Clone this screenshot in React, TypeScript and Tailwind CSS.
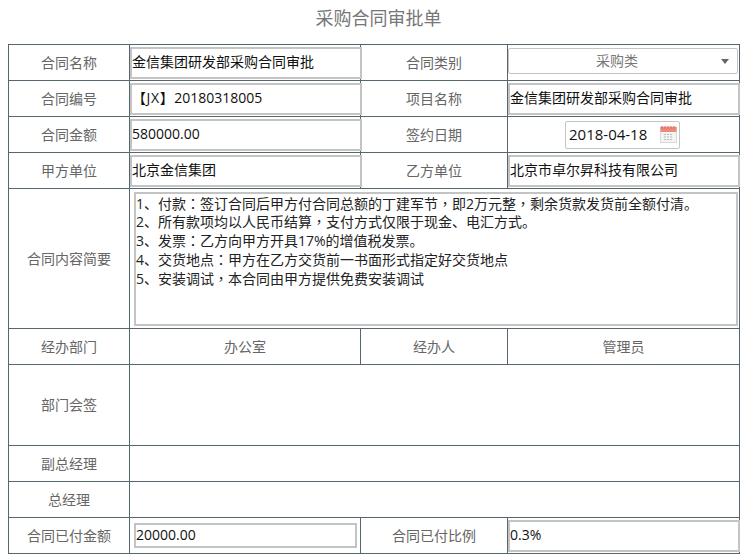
import React from "react";

const cellL = "border border-[#56666f] text-center text-[14px] text-[#666] p-0 pb-[1px] align-middle";
const cellV = "border border-[#56666f] p-0 align-middle relative";
const boxed = "block h-[32px] border-2 border-[#c4c4c4] bg-white text-[14px] leading-[26px] text-[#111] whitespace-nowrap box-border";
const line = "h-[18.75px] overflow-visible whitespace-nowrap";

function P({ c }: { c: string }) {
  return <span className="font-['Noto_Sans_CJK_TC',sans-serif]">{c}</span>;
}

export default function App() {
  return (
    <div className="w-[746px] h-[558px] bg-white overflow-hidden font-['Open_Sans','Noto_Sans_CJK_SC',sans-serif]">
      <div className="h-[44px] pl-[11px] text-center text-[18px] leading-[37px] text-[#777]">采购合同审批单</div>
      <table className="ml-[8px] w-[731px] table-fixed border-collapse border border-[#333]">
        <colgroup>
          <col className="w-[121px]" />
          <col className="w-[231px]" />
          <col className="w-[147px]" />
          <col className="w-[232px]" />
        </colgroup>
        <tbody>
          <tr className="h-[36px]">
            <td className={cellL}>合同名称</td>
            <td className={cellV}><div className={`${boxed} w-[232px]`}>金信集团研发部采购合同审批</div></td>
            <td className={cellL}>合同类别</td>
            <td className={cellV}>
              <div className="relative mb-[4px] box-border h-[26px] w-[230px] rounded-[2px] border border-[#c4c4c4] pr-[12px] text-center text-[14px] leading-[23px] text-[#777]">
                采购类
                <span className="absolute right-[8px] top-[10px] h-0 w-0 border-x-[4px] border-t-[5px] border-x-transparent border-t-[#666]" />
              </div>
            </td>
          </tr>
          <tr className="h-[36px]">
            <td className={cellL}>合同编号</td>
            <td className={cellV}><div className={`${boxed} w-[232px]`}><span className="tracking-[0.6px]">【JX】</span>20180318005</div></td>
            <td className={cellL}>项目名称</td>
            <td className={cellV}><div className={`${boxed} w-[232px]`}>金信集团研发部采购合同审批</div></td>
          </tr>
          <tr className="h-[36px]">
            <td className={cellL}>合同金额</td>
            <td className={cellV}><div className={`${boxed} w-[232px]`}>580000.00</div></td>
            <td className={cellL}>签约日期</td>
            <td className={cellV}>
              <div className="ml-[57px] flex h-[28px] w-[115px] items-center rounded-[2px] border border-[#c4c4c4] pl-[3px] text-[15px] leading-[24px] text-[#111]">
                <span className="mb-[1px]">2018-04-18</span>
                <svg className="ml-[13px]" width="17" height="17" viewBox="0 0 17 17">
                  <rect x="0.5" y="1" width="16" height="15.5" fill="#f4f4f4" stroke="#d8d8d8" />
                  <rect x="0.5" y="1" width="16" height="5" fill="#ee8a7c" />
                  <path d="M2 0v3M5 0v3M8 0v3M11 0v3M14 0v3" stroke="#e2675a" />
                  <path d="M4 8.5h9M4 11h9M4 13.5h9" stroke="#bbb" strokeDasharray="2 1" />
                </svg>
              </div>
            </td>
          </tr>
          <tr className="h-[36px]">
            <td className={cellL}>甲方单位</td>
            <td className={cellV}><div className={`${boxed} w-[232px]`}>北京金信集团</div></td>
            <td className={cellL}>乙方单位</td>
            <td className={cellV}><div className={`${boxed} w-[232px]`}>北京市卓尔昇科技有限公司</div></td>
          </tr>
          <tr className="h-[140px]">
            <td className={cellL}>合同内容简要</td>
            <td className={cellV} colSpan={3}>
              <div className="ml-[4px] box-border h-[134px] w-[604px] border-2 border-[#c4c4c4] text-[14px] leading-[18px] text-[#222]">
                <div className={line}>1、付款<P c="：" />签订合同后甲方付合同总额的丁建军节<P c="，" />即2万元整<P c="，" />剩余货款发货前全额付清。</div>
                <div className={line}>2、所有款项均以人民币结算<P c="，" />支付方式仅限于现金、电汇方式。</div>
                <div className={line}>3、发票<P c="：" />乙方向甲方开具17%的增值税发票。</div>
                <div className={line}>4、交货地点<P c="：" />甲方在乙方交货前一书面形式指定好交货地点</div>
                <div className={line}>5、安装调试<P c="，" />本合同由甲方提供免费安装调试</div>
              </div>
            </td>
          </tr>
          <tr className="h-[36px]">
            <td className={cellL}>经办部门</td>
            <td className={cellL}>办公室</td>
            <td className={cellL}>经办人</td>
            <td className={cellL}>管理员</td>
          </tr>
          <tr className="h-[81px]">
            <td className={cellL}>部门会签</td>
            <td className={cellV} colSpan={3}></td>
          </tr>
          <tr className="h-[36px]">
            <td className={cellL}>副总经理</td>
            <td className={cellV} colSpan={3}></td>
          </tr>
          <tr className="h-[36px]">
            <td className={cellL}>总经理</td>
            <td className={cellV} colSpan={3}></td>
          </tr>
          <tr className="h-[36px]">
            <td className={cellL}>合同已付金额</td>
            <td className={cellV}>
              <div className="ml-[4px] box-border h-[25px] w-[223px] border-2 border-[#c4c4c4] text-[14px] leading-[20px] text-[#111]">20000.00</div>
            </td>
            <td className={cellL}>合同已付比例</td>
            <td className={cellV}><div className={`${boxed} w-[232px]`}>0.3%</div></td>
          </tr>
        </tbody>
      </table>
    </div>
  );
}
